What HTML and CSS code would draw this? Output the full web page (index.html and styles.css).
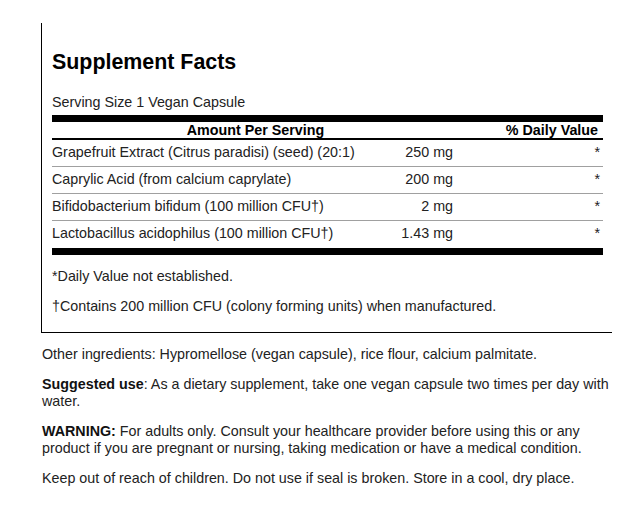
FILE: index.html
```html
<!DOCTYPE html>
<html>
<head>
<meta charset="utf-8">
<link rel="stylesheet" href="styles.css">
</head>
<body>
<div class="page">
  <div class="facts">
    <h1 class="title">Supplement Facts</h1>
    <div class="serving">Serving Size 1 Vegan Capsule</div>
    <div class="table">
      <div class="head-amount">Amount Per Serving</div>
      <div class="head-dv">% Daily Value</div>

      <div class="cell name">Grapefruit Extract (Citrus paradisi) (seed) (20:1)</div>
      <div class="cell amt">250 mg</div>
      <div class="cell dv">*</div>

      <div class="cell name">Caprylic Acid (from calcium caprylate)</div>
      <div class="cell amt">200 mg</div>
      <div class="cell dv">*</div>

      <div class="cell name">Bifidobacterium bifidum (100 million CFU†)</div>
      <div class="cell amt">2 mg</div>
      <div class="cell dv">*</div>

      <div class="cell name last">Lactobacillus acidophilus (100 million CFU†)</div>
      <div class="cell amt last">1.43 mg</div>
      <div class="cell dv last">*</div>
    </div>
    <p class="note">*Daily Value not established.</p>
    <p class="note">†Contains 200 million CFU (colony forming units) when manufactured.</p>
  </div>
  <div class="info">
    <p>Other ingredients: Hypromellose (vegan capsule), rice flour, calcium palmitate.</p>
    <p><b>Suggested use</b>: As a dietary supplement, take one vegan capsule two times per day with water.</p>
    <p><b>WARNING:</b> For adults only. Consult your healthcare provider before using this or any product if you are pregnant or nursing, taking medication or have a medical condition.</p>
    <p>Keep out of reach of children. Do not use if seal is broken. Store in a cool, dry place.</p>
  </div>
</div>
</body>
</html>
```

FILE: styles.css
```css
html, body {
  margin: 0;
  padding: 0;
  background: #fff;
}
body {
  font-family: "Liberation Sans", Arial, sans-serif;
  font-size: 14.3px;
  line-height: 16px;
  color: #222;
}
.page {
  padding: 23px 0 0 41px;
  width: 571px;
}
.facts {
  border-left: 1px solid #000;
  border-bottom: 1px solid #000;
  padding: 26px 9px 18px 10px;
}
.title {
  margin: 0;
  font-size: 21.4px;
  line-height: 26px;
  font-weight: bold;
  color: #000;
}
.serving {
  margin-top: 19px;
  margin-bottom: 5px;
}
.table {
  display: grid;
  grid-template-columns: 1fr 80px 150px;
  border-top: 7px solid #000;
  border-bottom: 7px solid #000;
}
.head-amount {
  grid-column: 1 / 3;
  padding: 0 0 0 6px;
  text-align: center;
  font-weight: bold;
  color: #000;
  border-bottom: 2px solid #000;
}
.head-dv {
  padding: 0 5px 0 0;
  text-align: right;
  font-weight: bold;
  color: #000;
  border-bottom: 2px solid #000;
}
.cell {
  padding: 4px 0 6px;
  border-bottom: 1px solid #a0a0a0;
}
.cell.last {
  border-bottom: none;
  padding-bottom: 7px;
}
.amt {
  text-align: right;
}
.dv {
  text-align: right;
  padding-right: 3px;
}
.note {
  margin: 13px 0 0;
}
.note + .note {
  margin-top: 14px;
}
.info {
  padding: 13px 0 0 1px;
}
.info p {
  margin: 0 0 14px;
  line-height: 16.4px;
}
.info b {
  color: #111;
}
```
